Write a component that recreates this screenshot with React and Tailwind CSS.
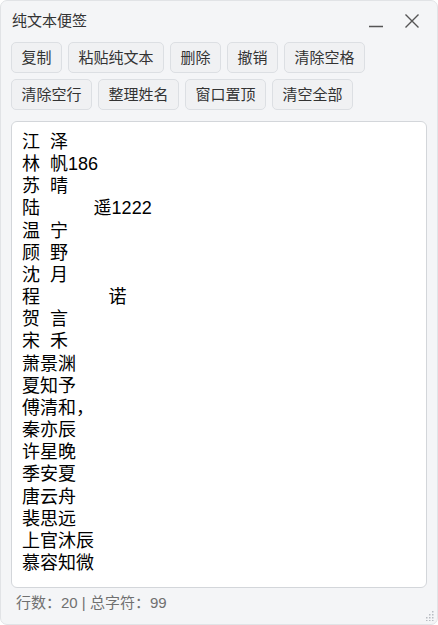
import React, { useState } from 'react';

const ACTIONS_TOP = ['复制', '粘贴纯文本', '删除', '撤销', '清除空格'];
const ACTIONS_BOTTOM = ['清除空行', '整理姓名', '窗口置顶', '清空全部'];

const INITIAL_TEXT = [
  '江  泽',
  '林  帆186',
  '苏  晴',
  '陆          \u2009遥1222',
  '温  宁',
  '顾  野',
  '沈  月',
  '程             \u2009诺',
  '贺  言',
  '宋  禾',
  '萧景渊',
  '夏知予',
  '傅清和，',
  '秦亦辰',
  '许星晚',
  '季安夏',
  '唐云舟',
  '裴思远',
  '上官沐辰',
  '慕容知微',
].join('\n');

const ToolButton = ({ label }) => (
  <button className="h-[31px] px-[9.5px] rounded-[5px] border border-[#dcdfe3] bg-[#f0f1f3] text-[15px] text-[#333] leading-none hover:bg-[#e6e8eb]">
    {label}
  </button>
);

export default function App() {
  const [text, setText] = useState(INITIAL_TEXT);
  const lines = text.split('\n').length;

  return (
    <div
      className="w-[438px] h-[625px] flex flex-col bg-[#f4f5f7] border border-[#e1e3e6] rounded-[7px] overflow-hidden"
      style={{ fontFamily: '"Liberation Sans", "Noto Sans CJK SC", sans-serif' }}
    >
      {/* title bar */}
      <div className="flex items-center h-[40px] pl-[11px] pr-[14px]">
        <span className="text-[15px] text-[#333] flex-1">纯文本便签</span>
        <button className="w-[22px] h-[22px] flex items-center justify-center mr-[14px] mt-[6px]">
          <svg width="16" height="16" viewBox="0 0 16 16">
            <path d="M1 10.5h14" stroke="#555" strokeWidth="1.5" />
          </svg>
        </button>
        <button className="w-[22px] h-[22px] flex items-center justify-center">
          <svg width="16" height="16" viewBox="0 0 16 16">
            <path d="M1.5 1.5l13 13M14.5 1.5l-13 13" stroke="#555" strokeWidth="1.4" />
          </svg>
        </button>
      </div>

      {/* toolbar */}
      <div className="flex flex-col gap-[6px] px-[10px] pt-[1px]">
        <div className="flex gap-[6px]">
          {ACTIONS_TOP.map((a) => (
            <ToolButton key={a} label={a} />
          ))}
        </div>
        <div className="flex gap-[6px]">
          {ACTIONS_BOTTOM.map((a) => (
            <ToolButton key={a} label={a} />
          ))}
        </div>
      </div>

      {/* editor */}
      <div className="flex-1 px-[10px] pt-[11px] flex flex-col min-h-0">
        <textarea
          value={text}
          onChange={(e) => setText(e.target.value)}
          spellCheck={false}
          className="flex-1 w-full resize-none rounded-[6px] border border-[#d3d6da] bg-white pl-[10px] pr-2 pt-[9px] text-[18px] leading-[22.15px] text-black outline-none whitespace-pre"
          style={{ fontFamily: '"Liberation Sans", "Noto Sans CJK SC", sans-serif' }}
        />
      </div>

      {/* status bar */}
      <div className="relative h-[36px] flex items-start pt-[5px] px-[15px] text-[15px] leading-[20px] text-[#707070]">
        行数：{lines} | 总字符：99
        <svg className="absolute right-[3px] bottom-[3px]" width="10" height="10" viewBox="0 0 10 10">
          {[
            [8, 0], [8, 3], [5, 3], [8, 6], [5, 6], [2, 6], [8, 9], [5, 9], [2, 9],
          ].map(([x, y]) => (
            <rect key={`${x}-${y}`} x={x} y={y - 0} width="1.5" height="1.5" fill="#b8bcc2" />
          ))}
        </svg>
      </div>
    </div>
  );
}
